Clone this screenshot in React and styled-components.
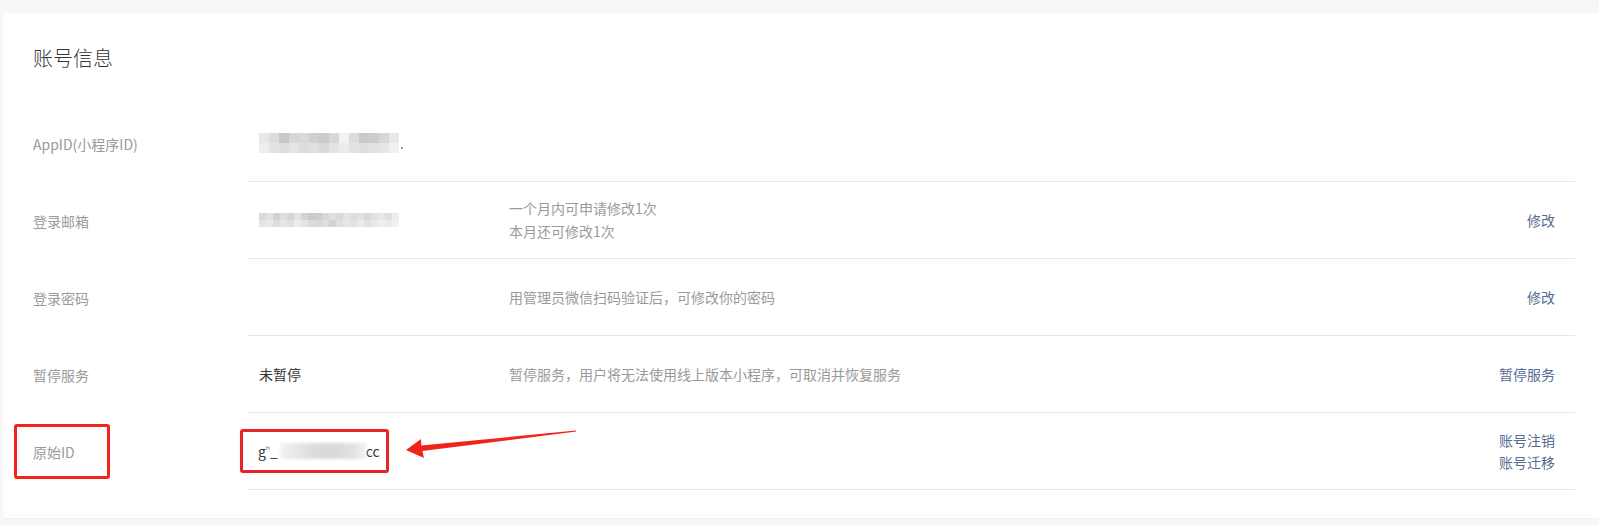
import React from 'react';
import styled, { createGlobalStyle } from 'styled-components';

const GlobalStyle = createGlobalStyle`
  html, body {
    margin: 0;
    padding: 0;
    background: #f6f7f9;
    font-family: "Noto Sans CJK SC", "Noto Sans", sans-serif;
  }
`;

const rows = [
  {
    label: 'AppID(小程序ID)',
    value: { mosaic: 'appid' },
  },
  {
    label: '登录邮箱',
    value: { mosaic: 'email' },
    desc: ['一个月内可申请修改1次', '本月还可修改1次'],
    actions: ['修改'],
  },
  {
    label: '登录密码',
    desc: ['用管理员微信扫码验证后，可修改你的密码'],
    actions: ['修改'],
  },
  {
    label: '暂停服务',
    value: { text: '未暂停' },
    desc: ['暂停服务，用户将无法使用线上版本小程序，可取消并恢复服务'],
    actions: ['暂停服务'],
  },
  {
    label: '原始ID',
    value: { masked: true },
    actions: ['账号注销', '账号迁移'],
    marked: true,
  },
];

const mosaics = {
  appid: {
    cell: 10,
    rows: [
      ['#e8e8e8', '#dcdcdc', '#c8c8c8', '#d6d6d6', '#dadada', '#d0d0d0', '#cbcbcb', '#d8d8d8', '#f2f2f2', '#dcdcdc', '#c9c9c9', '#cdcdcd', '#d8d8d8', '#e8e8e8'],
      ['#eeeeee', '#e2e2e2', '#dedede', '#e4e4e4', '#dcdcdc', '#e0e0e0', '#d9d9d9', '#e4e4e4', '#ececec', '#e2e2e2', '#dedede', '#e2e2e2', '#e6e6e6', '#f0f0f0'],
    ],
  },
  email: {
    cell: 7,
    rows: [
      ['#dadada', '#e2e2e2', '#d2d2d2', '#dedede', '#d6d6d6', '#e4e4e4', '#d4d4d4', '#cacaca', '#cecece', '#d8d8d8', '#e0e0e0', '#dadada', '#e4e4e4', '#dedede', '#e2e2e2', '#d8d8d8', '#e2e2e2', '#e8e8e8', '#e0e0e0', '#ececec'],
      ['#e4e4e4', '#e8e8e8', '#dedede', '#e6e6e6', '#e0e0e0', '#eaeaea', '#e4e4e4', '#dcdcdc', '#d8d8d8', '#dedede', '#d4d4d4', '#e0e0e0', '#e6e6e6', '#e2e2e2', '#eaeaea', '#e2e2e2', '#e8e8e8', '#eeeeee', '#eaeaea', '#f2f2f2'],
    ],
  },
};

export default function App() {
  return (
    <Page>
      <GlobalStyle />
      <Card>
        <Title>账号信息</Title>
        <Table>
          {rows.map(row => (
            <Row key={row.label}>
              <LabelCell>
                <Label $marked={row.marked}>{row.label}</Label>
              </LabelCell>
              <Content>
                <Value>
                  {row.value?.text && <ValueText>{row.value.text}</ValueText>}
                  {row.value?.mosaic && (
                    <Mosaic>
                      {mosaics[row.value.mosaic].rows.map((line, i) => (
                        <MosaicRow key={i}>
                          {line.map((c, j) => (
                            <MosaicCell
                              key={j}
                              $size={mosaics[row.value.mosaic].cell}
                              $color={c}
                            />
                          ))}
                        </MosaicRow>
                      ))}
                      {row.value.mosaic === 'appid' && <Dot />}
                    </Mosaic>
                  )}
                  {row.value?.masked && (
                    <MarkedValue>
                      g<Tick>ʰ</Tick>_<Smudge />cc
                    </MarkedValue>
                  )}
                </Value>
                <Desc>
                  {row.desc?.map(line => (
                    <div key={line}>{line}</div>
                  ))}
                </Desc>
                <Actions>
                  {row.actions?.map(a => (
                    <ActionLink key={a} href="#">
                      {a}
                    </ActionLink>
                  ))}
                </Actions>
                {row.marked && (
                  <Arrow width="180" height="45" viewBox="0 0 180 45">
                    <polygon
                      points="6,29 21,18 21.4,24.6 176,9.4 176.3,10.6 22.4,30 24,37"
                      fill="#f2231b"
                    />
                  </Arrow>
                )}
              </Content>
            </Row>
          ))}
        </Table>
      </Card>
    </Page>
  );
}

const Page = styled.div`
  padding: 13px 0 6px 3px;
`;

const Card = styled.div`
  background: #fff;
  border-radius: 4px 0 0 4px;
  box-shadow: 0 1px 2px rgba(0, 0, 0, 0.04);
  padding: 31px 24px 28px 30px;
`;

const Title = styled.h2`
  margin: 0 0 33px;
  font-size: 20px;
  line-height: 28px;
  font-weight: 300;
  color: #353535;
`;

const Table = styled.div`
  display: flex;
  flex-direction: column;
`;

const Row = styled.div`
  display: flex;
  height: 77px;
`;

const LabelCell = styled.div`
  flex: 0 0 215px;
  display: flex;
  align-items: center;
`;

const Label = styled.span`
  font-size: 14px;
  color: #9a9a9a;
  box-sizing: border-box;
  display: inline-flex;
  align-items: center;
  ${p =>
    p.$marked &&
    `
    height: 55px;
    width: 96px;
    margin-left: -19px;
    padding-left: 16px;
    border: 3px solid #f2231b;
    border-radius: 3px;
  `}
`;

const Content = styled.div`
  position: relative;
  flex: 1;
  display: flex;
  align-items: center;
  padding: 0 20px 0 11px;
  border-bottom: 1px solid #e7e7eb;
`;

const Value = styled.div`
  flex: 0 0 250px;
  display: flex;
  align-items: center;
`;

const ValueText = styled.span`
  font-size: 14px;
  color: #353535;
`;

const Mosaic = styled.div`
  position: relative;
  display: flex;
  flex-direction: column;
  filter: blur(0.6px);
`;

const MosaicRow = styled.div`
  display: flex;
`;

const MosaicCell = styled.span`
  width: ${p => p.$size}px;
  height: ${p => p.$size}px;
  background: ${p => p.$color};
`;

const Dot = styled.span`
  position: absolute;
  right: -4px;
  bottom: 4px;
  width: 2px;
  height: 2px;
  background: #9a9a9a;
`;

const MarkedValue = styled.span`
  box-sizing: border-box;
  display: inline-flex;
  align-items: center;
  height: 44px;
  width: 149px;
  margin-left: -19px;
  padding-left: 15px;
  border: 3px solid #e2262a;
  border-radius: 3px;
  font-size: 14px;
  color: #353535;
  box-shadow: 0 0 3px rgba(0, 0, 0, 0.08);
`;

const Tick = styled.span`
  font-size: 10px;
  align-self: flex-start;
  margin-top: 9px;
  color: #666;
`;

const Smudge = styled.span`
  display: inline-block;
  width: 86px;
  height: 16px;
  margin: 0 0 0 2px;
  background: linear-gradient(90deg, #f3f3f3 0%, #dedede 35%, #d8d8d8 60%, #e2e2e2 85%, #f2f2f2 100%);
  filter: blur(1.5px);
`;

const Desc = styled.div`
  flex: 1;
  font-size: 14px;
  line-height: 23px;
  color: #9a9a9a;
`;

const Actions = styled.div`
  display: flex;
  flex-direction: column;
  align-items: flex-end;
  font-size: 14px;
  line-height: 22px;
`;

const ActionLink = styled.a`
  color: #576b95;
  text-decoration: none;
`;

const Arrow = styled.svg`
  position: absolute;
  left: 152px;
  top: 8px;
`;
